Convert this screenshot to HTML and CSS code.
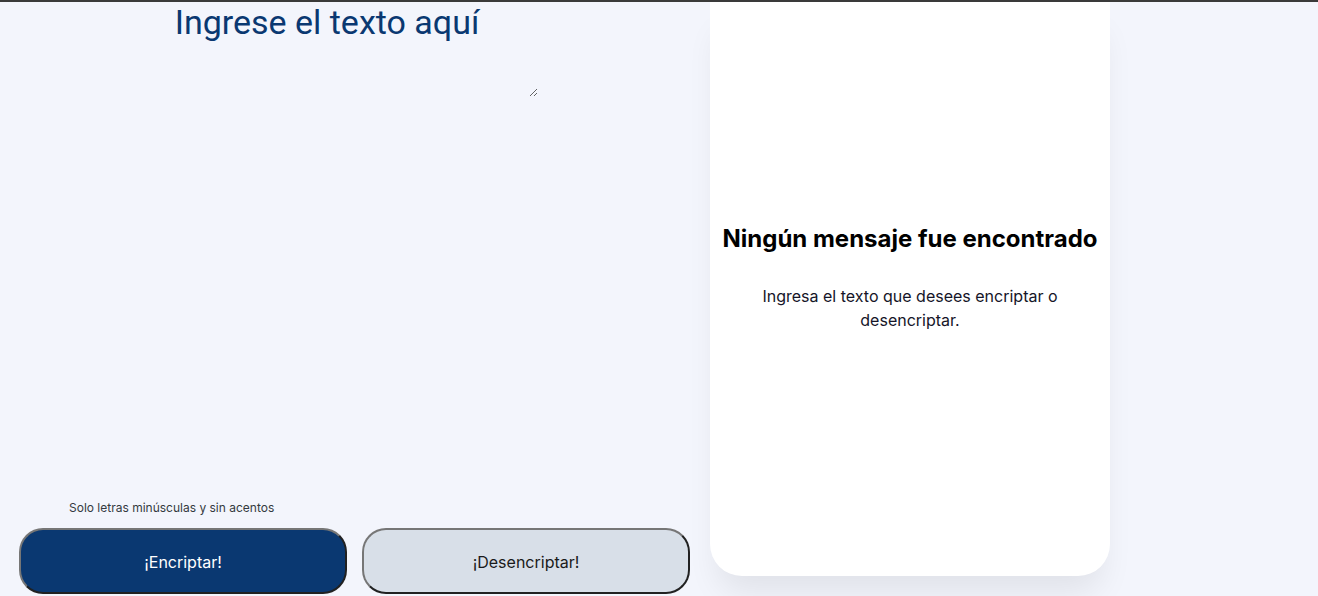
FILE: index.html
```html
<!DOCTYPE html>
<html lang="es">
<head>
<meta charset="utf-8">
<title>Encriptador</title>
<link rel="stylesheet" href="styles.css">
</head>
<body>
<div class="topbar"></div>
<main class="layout">
  <section class="input-col">
    <textarea class="entrada" placeholder="Ingrese el texto aquí"></textarea>
    <div class="spacer"></div>
    <p class="nota">Solo letras minúsculas y sin acentos</p>
    <div class="botones">
      <button class="btn btn-primary">¡Encriptar!</button>
      <button class="btn btn-secondary">¡Desencriptar!</button>
    </div>
  </section>
  <aside class="card">
    <h2 class="card-title">Ningún mensaje fue encontrado</h2>
    <p class="card-text">Ingresa el texto que desees encriptar o desencriptar.</p>
  </aside>
</main>
</body>
</html>
```
FILE: styles.css
```css
* { box-sizing: border-box; }
html, body {
  margin: 0;
  height: 596px;
  overflow: hidden;
  background: #f3f5fc;
  font-family: Inter, "Noto Sans", sans-serif;
}
.topbar {
  position: relative;
  z-index: 2;
  height: 2px;
  background: #3a3a3a;
}
.layout {
  display: flex;
  height: 594px;
  gap: 20px;
}
.input-col {
  width: 690px;
  padding-left: 19px;
  display: flex;
  flex-direction: column;
}
.entrada {
  margin-left: 97px;
  width: 422px;
  height: 95px;
  border: none;
  outline: none;
  background: transparent;
  padding: 0 2px;
  font-family: Roboto, sans-serif;
  font-size: 34px;
  color: #0a3871;
  text-align: center;
}
.entrada::placeholder {
  color: #0a3871;
  opacity: 1;
}
.spacer { flex: 1; }
.nota {
  margin: 0 0 13px 50px;
  font-size: 12px;
  line-height: 15px;
  color: #343a40;
}
.botones {
  display: flex;
  gap: 15px;
  margin-bottom: 2px;
}
.btn {
  width: 328px;
  height: 66px;
  padding-top: 3px;
  border: 2px outset #767676;
  border-radius: 24px;
  font-family: Inter, sans-serif;
  font-size: 16px;
}
.btn-primary {
  background: #0a3871;
  color: #ffffff;
}
.btn-secondary {
  background: #d8dfe8;
  color: #1a1a1a;
}
.card {
  width: 400px;
  height: 574px;
  background: #ffffff;
  border-radius: 0 0 32px 32px;
  box-shadow: 0 24px 32px -8px rgba(0, 0, 0, 0.08);
  padding: 222px 8px 0;
  text-align: center;
}
.card-title {
  margin: 0;
  font-size: 24px;
  line-height: 30px;
  font-weight: 700;
  color: #000000;
  white-space: nowrap;
}
.card-text {
  margin: 30px auto 0;
  width: 320px;
  font-size: 16px;
  line-height: 24px;
  color: #151528;
}
```
